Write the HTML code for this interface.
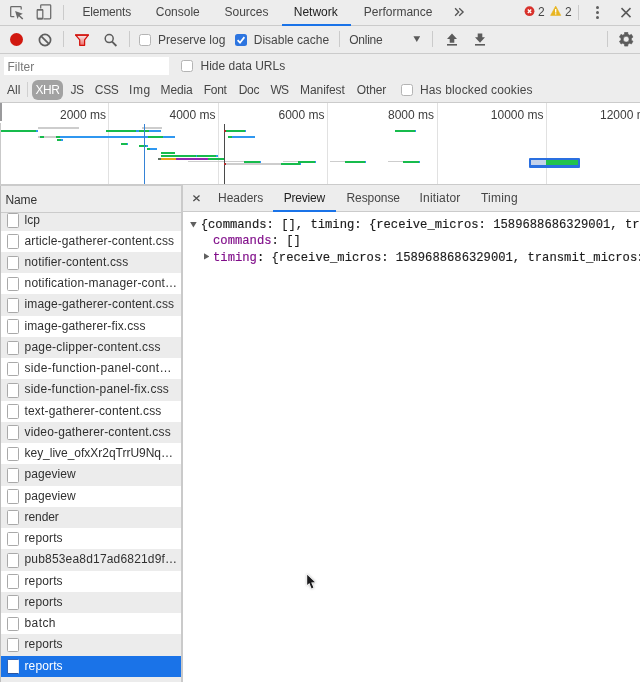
<!DOCTYPE html>
<html><head>
<meta charset="utf-8">
<title>DevTools Network</title>
<style>
*{box-sizing:border-box;margin:0;padding:0}
html,body{width:640px;height:682px;overflow:hidden;background:#fff}
body{position:relative;font-family:"Liberation Sans",sans-serif;font-size:12px;color:#333;-webkit-font-smoothing:antialiased}
.abs{position:absolute}
.t{position:absolute;white-space:nowrap;line-height:14px;height:14px;font-size:12px;color:#464646}
#tabbar{left:0;top:0;width:640px;height:26px;background:#ededed;border-bottom:1px solid #cbcbcb}
#toolbar{left:0;top:26px;width:640px;height:28px;background:#ededed;border-bottom:1px solid #cbcbcb}
#filterbar{left:0;top:54px;width:640px;height:49px;background:#ededed;border-bottom:1px solid #cbcbcb}
.vdiv{position:absolute;width:1px;background:#cbcbcb}
.cb{position:absolute;width:12px;height:12px;border:1px solid #b4b4b4;border-radius:2.5px;background:#fff}
#overview{left:0;top:103px;width:640px;height:82px;background:#fff;border-bottom:1px solid #cbcbcb;overflow:hidden}
.grid{position:absolute;top:0;width:1px;height:82px;background:#e1e1e1}
.ol{position:absolute;top:5px;line-height:14px;font-size:12px;color:#3c3c3c;text-align:right;width:80px;white-space:nowrap}
.b{position:absolute;height:2px}
.g{background:#17bb4c}.u{background:#2f97f0}.y{background:#cdcdcd;height:1.2px;margin-top:0.4px}.o{background:#e8a317}.d{background:#5d6f62}.p{background:#9228b0}
#left{left:0;top:185px;width:181px;height:497px;background:#fff;overflow:hidden}
#lhead{left:0;top:0;width:181px;height:28px;background:#ededed;border-bottom:1px solid #cbcbcb}
.row{position:absolute;left:0;width:181px;height:21.3px}
.row.odd{background:#ececec}
.row .ic{position:absolute;left:7px;top:3.6px;width:12px;height:14.6px;border:1px solid #a9a9a9;border-radius:1.5px;background:#fff}
.row .nm{position:absolute;left:24.5px;top:3px;line-height:14px;font-size:12px;letter-spacing:0.16px;white-space:nowrap;color:#303030}
.row.sel{background:#1a73e8}
.row.sel .nm{color:#fff}
.row.sel .ic{border-color:#3565b5 #e8eefa #2b55a0 #3565b5}
#split{left:181px;top:185px;width:2px;height:497px;background:#cacaca}
#right{left:183px;top:185px;width:457px;height:497px;background:#fff;overflow:hidden}
#rhead{left:0;top:0;width:457px;height:27px;background:#ededed;border-bottom:1px solid #cbcbcb}
.mono{font-family:"Liberation Mono",monospace;font-size:12.2px;line-height:16px;height:16px;color:#1c1c1c;white-space:pre;position:absolute;-webkit-text-stroke:0.15px currentColor}
.pu{color:#800e8a}
</style>
</head>
<body>
<div id="w" style="position:absolute;left:0;top:0;width:640px;height:682px;will-change:transform">

<!-- ===== main tab bar ===== -->
<div id="tabbar" class="abs">
  <svg class="abs" style="left:9px;top:5px" width="16" height="16" viewBox="0 0 16 16">
    <path d="M5.3 11.7H2.5a.8.8 0 0 1-.8-.8V2.5a.8.8 0 0 1 .8-.8h8.9a.8.8 0 0 1 .8.8v2" fill="none" stroke="#6a6a6a" stroke-width="1.25"></path>
    <path d="M6.1 6.1l7.7 2.7-3 1.4 3.5 3.3-1.1 1.1-3.4-3.4-1.3 2.9z" fill="#6a6a6a"></path>
  </svg>
  <svg class="abs" style="left:35px;top:3px" width="18" height="18" viewBox="0 0 18 18">
    <path d="M5.7 5.6V2.6a.8.8 0 0 1 .8-.8h8.4a.8.8 0 0 1 .8.8v12.5a.8.8 0 0 1-.8.8H8.4" fill="none" stroke="#6a6a6a" stroke-width="1.25"></path>
    <rect x="2.2" y="6.5" width="5.6" height="9.4" rx="0.8" fill="none" stroke="#6a6a6a" stroke-width="1.25"></rect>
    <rect x="2.2" y="6" width="5.6" height="1.6" fill="#6a6a6a"></rect>
    <rect x="2.2" y="14.7" width="5.6" height="1.7" fill="#6a6a6a"></rect>
  </svg>
  <div class="vdiv" style="left:63px;top:5px;height:15px"></div>
  <div class="t" style="left:82.5px;top:5px;letter-spacing:-0.18px">Elements</div>
  <div class="t" style="left:155.75px;top:5px">Console</div>
  <div class="t" style="left:224.5px;top:5px">Sources</div>
  <div class="t" style="left:293.75px;top:5px;color:#222">Network</div>
  <div class="abs" style="left:281.75px;top:24px;width:69.5px;height:2px;background:#1a73e8"></div>
  <div class="t" style="left:363.75px;top:5px">Performance</div>
  <svg class="abs" style="left:454px;top:7px" width="11" height="10" viewBox="0 0 11 10">
    <path d="M1.1 1.2L4.7 5 1.1 8.7M5.2 1.2L9.1 5 5.2 8.7" fill="none" stroke="#555" stroke-width="1.35"></path>
  </svg>
  <!-- error -->
  <svg class="abs" style="left:524px;top:6px" width="11" height="11" viewBox="0 0 11 11">
    <circle cx="5.5" cy="5.2" r="4.9" fill="#d8322c"></circle>
    <path d="M3.8 3.5l3.4 3.4M7.2 3.5l-3.4 3.4" stroke="#fff" stroke-width="1.4"></path>
  </svg>
  <div class="t" style="left:538px;top:5px">2</div>
  <svg class="abs" style="left:550px;top:5px" width="12" height="11" viewBox="0 0 12 11">
    <path d="M5.7 1.1L10.8 10.4H0.6z" fill="#e8b520" stroke="#e8b520" stroke-width="0.6" stroke-linejoin="round"></path>
    <rect x="5.05" y="4" width="1.3" height="3.6" fill="#fff"></rect>
    <rect x="5.05" y="8.3" width="1.3" height="1.2" fill="#fff"></rect>
  </svg>
  <div class="t" style="left:565px;top:5px">2</div>
  <div class="vdiv" style="left:578px;top:5px;height:15px"></div>
  <div class="abs" style="left:596px;top:6px;width:3px;height:3px;border-radius:50%;background:#5f5f5f"></div>
  <div class="abs" style="left:596px;top:11px;width:3px;height:3px;border-radius:50%;background:#5f5f5f"></div>
  <div class="abs" style="left:596px;top:16px;width:3px;height:3px;border-radius:50%;background:#5f5f5f"></div>
  <svg class="abs" style="left:620px;top:7px" width="12" height="11" viewBox="0 0 12 11">
    <path d="M1.5 1.1l9 9M10.5 1.1l-9 9" stroke="#5a5a5a" stroke-width="1.5"></path>
  </svg>
</div>

<!-- ===== network toolbar ===== -->
<div id="toolbar" class="abs">
  <div class="abs" style="left:10px;top:7px;width:13px;height:13px;border-radius:50%;background:#d1180f"></div>
  <svg class="abs" style="left:38px;top:7px" width="14" height="14" viewBox="0 0 14 14">
    <circle cx="7" cy="7" r="5.6" fill="none" stroke="#5f5f5f" stroke-width="1.7"></circle>
    <line x1="3.1" y1="3.1" x2="10.9" y2="10.9" stroke="#5f5f5f" stroke-width="1.7"></line>
  </svg>
  <div class="vdiv" style="left:63px;top:5px;height:16px"></div>
  <svg class="abs" style="left:74px;top:7px" width="16" height="14" viewBox="0 0 16 14">
    <defs><linearGradient id="fg" x1="0" y1="0" x2="0" y2="1"><stop offset="0" stop-color="#f4f0f0"></stop><stop offset="0.45" stop-color="#f3b3b0"></stop><stop offset="1" stop-color="#ee6f6a"></stop></linearGradient></defs>
    <path d="M1.7 2.1H14.3L10.6 6.9V12.3H5.7V6.9z" fill="url(#fg)" stroke="#d3120c" stroke-width="1.25" stroke-linejoin="round"></path>
    <rect x="1.1" y="1.3" width="13.8" height="1.4" fill="#d3120c"></rect>
  </svg>
  <svg class="abs" style="left:103px;top:7px" width="15" height="15" viewBox="0 0 15 15">
    <circle cx="6.2" cy="5.6" r="4" fill="none" stroke="#5c5c5c" stroke-width="1.5"></circle>
    <line x1="9.1" y1="8.6" x2="13.4" y2="13" stroke="#5c5c5c" stroke-width="1.8"></line>
  </svg>
  <div class="vdiv" style="left:129px;top:5px;height:16px"></div>
  <div class="cb" style="left:138.8px;top:7.7px"></div>
  <div class="t" style="left:158px;top:6.6px">Preserve log</div>
  <div class="abs" style="left:235px;top:7.7px;width:12px;height:12px;border-radius:2.5px;background:#2d75e0"></div>
  <svg class="abs" style="left:235px;top:7.7px" width="12" height="12" viewBox="0 0 12 12">
    <path d="M2.6 6.2l2.4 2.5 4.4-5.6" fill="none" stroke="#fff" stroke-width="1.7"></path>
  </svg>
  <div class="t" style="left:253.75px;top:6.6px">Disable cache</div>
  <div class="vdiv" style="left:339px;top:5px;height:16px"></div>
  <div class="t" style="left:349.25px;top:6.6px;letter-spacing:-0.25px">Online</div>
  <svg class="abs" style="left:412.8px;top:10.2px" width="7.6" height="6.4" viewBox="0 0 8 7">
    <path d="M0.3 0.3h7.4L4 6.7z" fill="#5a5a5a"></path>
  </svg>
  <div class="vdiv" style="left:432px;top:5px;height:16px"></div>
  <svg class="abs" style="left:445.6px;top:7px" width="12" height="13" viewBox="0 0 12 13">
    <path d="M6 0.4l5 5.6H8.3v3.8H3.7V6H1z" fill="#5c5c5c"></path>
    <rect x="1" y="11" width="10" height="1.6" fill="#5c5c5c"></rect>
  </svg>
  <svg class="abs" style="left:474px;top:7px" width="12" height="13" viewBox="0 0 12 13">
    <path d="M6 9.8l5-5.6H8.3V0.4H3.7v3.8H1z" fill="#5c5c5c"></path>
    <rect x="1" y="11" width="10" height="1.6" fill="#5c5c5c"></rect>
  </svg>
  <div class="vdiv" style="left:607px;top:5px;height:16px"></div>
  <svg class="abs" style="left:618.7px;top:6.1px" width="15" height="15" viewBox="0 0 15 15">
    <path fill="#5c5c5c" fill-rule="evenodd" stroke="#5c5c5c" stroke-width="0.6" stroke-linejoin="round" d="M5.47 2.19 L5.60 0.28 L8.80 0.28 L8.93 2.19 L10.68 3.20 L12.39 2.36 L13.99 5.12 L12.40 6.19 L12.40 8.21 L13.99 9.28 L12.39 12.04 L10.68 11.20 L8.93 12.21 L8.80 14.12 L5.60 14.12 L5.47 12.21 L3.72 11.20 L2.01 12.04 L0.41 9.28 L2.00 8.21 L2.00 6.19 L0.41 5.12 L2.01 2.36 L3.72 3.20Z M4.30 7.20 a2.9 2.9 0 1 0 5.8 0 a2.9 2.9 0 1 0 -5.8 0Z"></path>
  </svg>
</div>

<!-- ===== filter bar ===== -->
<div id="filterbar" class="abs">
  <div class="abs" style="left:4px;top:2.6px;width:165px;height:18px;background:#fff"></div>
  <div class="t" style="left:7.5px;top:6px;color:#787878">Filter</div>
  <div class="cb" style="left:181.2px;top:5.9px"></div>
  <div class="t" style="left:200.5px;top:4.8px">Hide data URLs</div>

  <div class="t" style="left:7px;top:28.6px">All</div>
  <div class="vdiv" style="left:27.4px;top:28px;height:15px;background:#d0d0d0"></div>
  <div class="abs" style="left:32.2px;top:26px;width:31px;height:19.8px;border-radius:6px;background:#a2a2a2"></div>
  <div class="t" style="left:35.5px;top:28.6px;color:#fff;letter-spacing:-0.4px">XHR</div>
  <div class="t" style="left:70.6px;top:28.6px;letter-spacing:-0.6px">JS</div>
  <div class="t" style="left:94.8px;top:28.6px;letter-spacing:-0.3px">CSS</div>
  <div class="t" style="left:129px;top:28.6px;letter-spacing:0.55px">Img</div>
  <div class="t" style="left:160.5px;top:28.6px;letter-spacing:-0.12px">Media</div>
  <div class="t" style="left:203.75px;top:28.6px;letter-spacing:-0.3px">Font</div>
  <div class="t" style="left:238.75px;top:28.6px;letter-spacing:-0.3px">Doc</div>
  <div class="t" style="left:270.4px;top:28.6px;letter-spacing:-0.6px">WS</div>
  <div class="t" style="left:300px;top:28.6px;letter-spacing:-0.07px">Manifest</div>
  <div class="t" style="left:356.75px;top:28.6px;letter-spacing:-0.13px">Other</div>
  <div class="cb" style="left:401.2px;top:30.2px"></div>
  <div class="t" style="left:420px;top:28.6px;letter-spacing:0.136px">Has blocked cookies</div>
</div>

<!-- ===== overview ===== -->
<div id="overview" class="abs">
  <div class="abs" style="left:0;top:0;width:2px;height:18px;background:#9a9a9c"></div>
  <div class="abs" style="left:0;top:19.5px;width:1px;height:63px;background:#c9c9c9"></div>
  <div class="grid" style="left:108px"></div>
  <div class="grid" style="left:218px"></div>
  <div class="grid" style="left:327px"></div>
  <div class="grid" style="left:437px"></div>
  <div class="grid" style="left:546px"></div>
  <div class="ol" style="left:26px">2000 ms</div>
  <div class="ol" style="left:135.5px">4000 ms</div>
  <div class="ol" style="left:244.5px">6000 ms</div>
  <div class="ol" style="left:354px">8000 ms</div>
  <div class="ol" style="left:463.5px">10000 ms</div>
  <div class="ol" style="left:600px;text-align:left">12000 ms</div>
  <div id="bars"><div class="b g" style="left:1px;width:35px;top:27px"></div>
<div class="b u" style="left:36px;width:2px;top:27px"></div>
<div class="b y" style="left:38px;width:41px;top:24px"></div>
<div class="b y" style="left:38px;width:2px;top:33px"></div>
<div class="b g" style="left:40px;width:4px;top:33px"></div>
<div class="b y" style="left:44px;width:12px;top:33px"></div>
<div class="b g" style="left:56px;width:4px;top:33px"></div>
<div class="b u" style="left:60px;width:87.5px;top:33px"></div>
<div class="b g" style="left:147.5px;width:15px;top:33px"></div>
<div class="b u" style="left:162.5px;width:12.5px;top:33px"></div>
<div class="b g" style="left:57px;width:4px;top:36px"></div>
<div class="b u" style="left:61px;width:2px;top:36px"></div>
<div class="b g" style="left:106px;width:30px;top:27px"></div>
<div class="b u" style="left:136px;width:3px;top:27px"></div>
<div class="b g" style="left:139px;width:9.5px;top:27px"></div>
<div class="b u" style="left:148.5px;width:12px;top:27px"></div>
<div class="b y" style="left:141.5px;width:20.5px;top:24px"></div>
<div class="b g" style="left:121px;width:6px;top:39.5px"></div>
<div class="b u" style="left:127px;width:1px;top:39.5px"></div>
<div class="b g" style="left:139px;width:7px;top:42px"></div>
<div class="b u" style="left:146px;width:2px;top:42px"></div>
<div class="b g" style="left:147px;width:3px;top:45px"></div>
<div class="b u" style="left:150px;width:7px;top:45px"></div>
<div class="b g" style="left:161px;width:13.5px;top:48.5px"></div>
<div class="b g" style="left:161px;width:34.5px;top:51.5px"></div>
<div class="b u" style="left:195.5px;width:1px;top:51.5px"></div>
<div class="b g" style="left:196.5px;width:19.5px;top:51.5px"></div>
<div class="b u" style="left:216px;width:1.5px;top:51.5px"></div>
<div class="b d" style="left:158px;width:3px;top:54.5px"></div>
<div class="b o" style="left:161px;width:15px;top:54.5px"></div>
<div class="b p" style="left:176px;width:31.5px;top:54.5px"></div>
<div class="b g" style="left:207.5px;width:16.5px;top:54.5px"></div>
<div class="b y" style="left:187.5px;width:56px;top:57.5px"></div>
<div class="b g" style="left:243.5px;width:16.5px;top:57.5px"></div>
<div class="b u" style="left:260px;width:1px;top:57.5px"></div>
<div class="b y" style="left:225px;width:56px;top:60px"></div>
<div class="b g" style="left:281px;width:19px;top:60px"></div>
<div class="b u" style="left:300px;width:1px;top:60px"></div>
<div class="b g" style="left:225px;width:19.5px;top:27px"></div>
<div class="b u" style="left:244.5px;width:1px;top:27px"></div>
<div class="b g" style="left:228px;width:4px;top:33px"></div>
<div class="b u" style="left:232px;width:23px;top:33px"></div>
<div class="b y" style="left:283px;width:15px;top:57.5px"></div>
<div class="b g" style="left:298px;width:16.5px;top:57.5px"></div>
<div class="b u" style="left:314.5px;width:1px;top:57.5px"></div>
<div class="b y" style="left:330px;width:14.5px;top:57.5px"></div>
<div class="b g" style="left:344.5px;width:20px;top:57.5px"></div>
<div class="b u" style="left:364.5px;width:1px;top:57.5px"></div>
<div class="b g" style="left:394.5px;width:20.5px;top:27px"></div>
<div class="b u" style="left:415px;width:1px;top:27px"></div>
<div class="b y" style="left:388px;width:15px;top:57.5px"></div>
<div class="b g" style="left:403px;width:15.5px;top:57.5px"></div>
<div class="b u" style="left:418.5px;width:1px;top:57.5px"></div>
<div class="abs" style="left:143.8px;top:21px;width:1.1px;height:61px;background:#3583d6"></div>
<div class="abs" style="left:224px;top:21px;width:1.2px;height:61px;background:#4a4a4a"></div>
<div class="abs" style="left:223.6px;top:27px;width:2px;height:2px;background:#b02a2a"></div>
<div class="abs" style="left:223.6px;top:60px;width:2px;height:2.4px;background:#b02a2a"></div>
<div class="abs" style="left:529px;top:54.5px;width:50.5px;height:10px;background:#2a6fe0;border-radius:1px"></div>
<div class="abs" style="left:531px;top:56.6px;width:15px;height:5.8px;background:#c4d2ea"></div>
<div class="abs" style="left:546px;top:56.6px;width:31.5px;height:5.8px;background:#22c24e"></div></div>
</div>

<!-- ===== left list ===== -->
<div id="left" class="abs">
  <div id="rows"><div class="row odd" style="top:24.50px"><div class="ic"></div><div class="nm" style="letter-spacing:0.02px">lcp</div></div>
<div class="row" style="top:45.74px"><div class="ic"></div><div class="nm" style="letter-spacing:0.156px">article-gatherer-content.css</div></div>
<div class="row odd" style="top:66.98px"><div class="ic"></div><div class="nm" style="letter-spacing:0.157px">notifier-content.css</div></div>
<div class="row" style="top:88.22px"><div class="ic"></div><div class="nm" style="letter-spacing:0.208px">notification-manager-cont…</div></div>
<div class="row odd" style="top:109.46px"><div class="ic"></div><div class="nm" style="letter-spacing:0.141px">image-gatherer-content.css</div></div>
<div class="row" style="top:130.70px"><div class="ic"></div><div class="nm" style="letter-spacing:0.105px">image-gatherer-fix.css</div></div>
<div class="row odd" style="top:151.94px"><div class="ic"></div><div class="nm" style="letter-spacing:0.225px">page-clipper-content.css</div></div>
<div class="row" style="top:173.18px"><div class="ic"></div><div class="nm" style="letter-spacing:0.284px">side-function-panel-cont…</div></div>
<div class="row odd" style="top:194.42px"><div class="ic"></div><div class="nm" style="letter-spacing:0.216px">side-function-panel-fix.css</div></div>
<div class="row" style="top:215.66px"><div class="ic"></div><div class="nm" style="letter-spacing:0.172px">text-gatherer-content.css</div></div>
<div class="row odd" style="top:236.90px"><div class="ic"></div><div class="nm" style="letter-spacing:0.165px">video-gatherer-content.css</div></div>
<div class="row" style="top:258.14px"><div class="ic"></div><div class="nm" style="letter-spacing:-0.02px">key_live_ofxXr2qTrrU9Nq…</div></div>
<div class="row odd" style="top:279.38px"><div class="ic"></div><div class="nm" style="letter-spacing:0.08px">pageview</div></div>
<div class="row" style="top:300.62px"><div class="ic"></div><div class="nm" style="letter-spacing:0.08px">pageview</div></div>
<div class="row odd" style="top:321.86px"><div class="ic"></div><div class="nm" style="letter-spacing:-0.07px">render</div></div>
<div class="row" style="top:343.10px"><div class="ic"></div><div class="nm" style="letter-spacing:0.125px">reports</div></div>
<div class="row odd" style="top:364.34px"><div class="ic"></div><div class="nm" style="letter-spacing:0.18px">pub853ea8d17ad6821d9f…</div></div>
<div class="row" style="top:385.58px"><div class="ic"></div><div class="nm" style="letter-spacing:0.125px">reports</div></div>
<div class="row odd" style="top:406.82px"><div class="ic"></div><div class="nm" style="letter-spacing:0.125px">reports</div></div>
<div class="row" style="top:428.06px"><div class="ic"></div><div class="nm" style="letter-spacing:0.4px">batch</div></div>
<div class="row odd" style="top:449.30px"><div class="ic"></div><div class="nm" style="letter-spacing:0.125px">reports</div></div>
<div class="row sel" style="top:470.54px"><div class="ic"></div><div class="nm" style="letter-spacing:0.125px">reports</div></div>
<div class="row odd" style="top:491.78px"></div></div>
  <div id="lhead" class="abs"><div class="t" style="left:5.5px;top:7.5px;letter-spacing:-0.12px;color:#333">Name</div></div>
  <div class="abs" style="left:0;top:0;width:1px;height:497px;background:#bdbdbd"></div>
</div>
<div id="split" class="abs"></div>
<div class="abs" style="left:0;top:185px;width:640px;height:1px;background:#cbcbcb"></div>

<!-- ===== right detail ===== -->
<div id="right" class="abs">
  <div id="rhead" class="abs">
    <svg class="abs" style="left:10px;top:9.5px" width="8" height="8" viewBox="0 0 8 8"><path d="M0.4 0.5L6.5 6.1M6.5 0.5L0.4 6.1" stroke="#4d4d4d" stroke-width="1.3"></path></svg>
    <div class="t" style="left:35px;top:6px">Headers</div>
    <div class="t" style="left:100.75px;top:6px;letter-spacing:-0.2px;color:#222">Preview</div>
    <div class="abs" style="left:90.25px;top:25.4px;width:62.5px;height:1.6px;background:#1a73e8"></div>
    <div class="t" style="left:163.5px;top:6px;letter-spacing:-0.08px">Response</div>
    <div class="t" style="left:236.6px;top:6px;letter-spacing:0.17px">Initiator</div>
    <div class="t" style="left:298px;top:6px;letter-spacing:0.2px">Timing</div>
  </div>
  <svg class="abs" style="left:7.4px;top:37.3px" width="6.8" height="5.6" viewBox="0 0 7 6"><path d="M0 0h7L3.5 6z" fill="#606060"></path></svg>
  <div class="mono" style="left:17.7px;top:31.5px">{commands: [], timing: {receive_micros: 1589688686329001, transmit_micros: 1589688686331000}}</div>
  <div class="mono" style="left:30px;top:48.25px"><span class="pu">commands</span>: []</div>
  <svg class="abs" style="left:21px;top:68.4px" width="5.4" height="6.8" viewBox="0 0 6 7"><path d="M0 0v7L6 3.5z" fill="#606060"></path></svg>
  <div class="mono" style="left:30px;top:64.5px"><span class="pu">timing</span>: {receive_micros: 1589688686329001, transmit_micros: 1589688686331000}</div>

  <!-- colon sliver at clip edge -->
  <div class="abs" style="left:455.6px;top:68.6px;width:1.4px;height:2px;background:#555"></div>
  <div class="abs" style="left:455.6px;top:74.2px;width:1.4px;height:2px;background:#555"></div>
  <!-- mouse cursor -->
  <svg class="abs" style="left:122px;top:387px;filter:drop-shadow(0 0.6px 0.9px rgba(0,0,0,0.28))" width="14" height="20" viewBox="0 0 14 20">
    <path d="M2.2 2.7V13l2.2-2 2.2 5.4 1.8-.8-2.2-5.2 3.8-.1z" fill="#1b1b1d" stroke="#fff" stroke-width="1.3" stroke-linejoin="round" paint-order="stroke"></path>
  </svg>
</div>

</div>



</body></html>
